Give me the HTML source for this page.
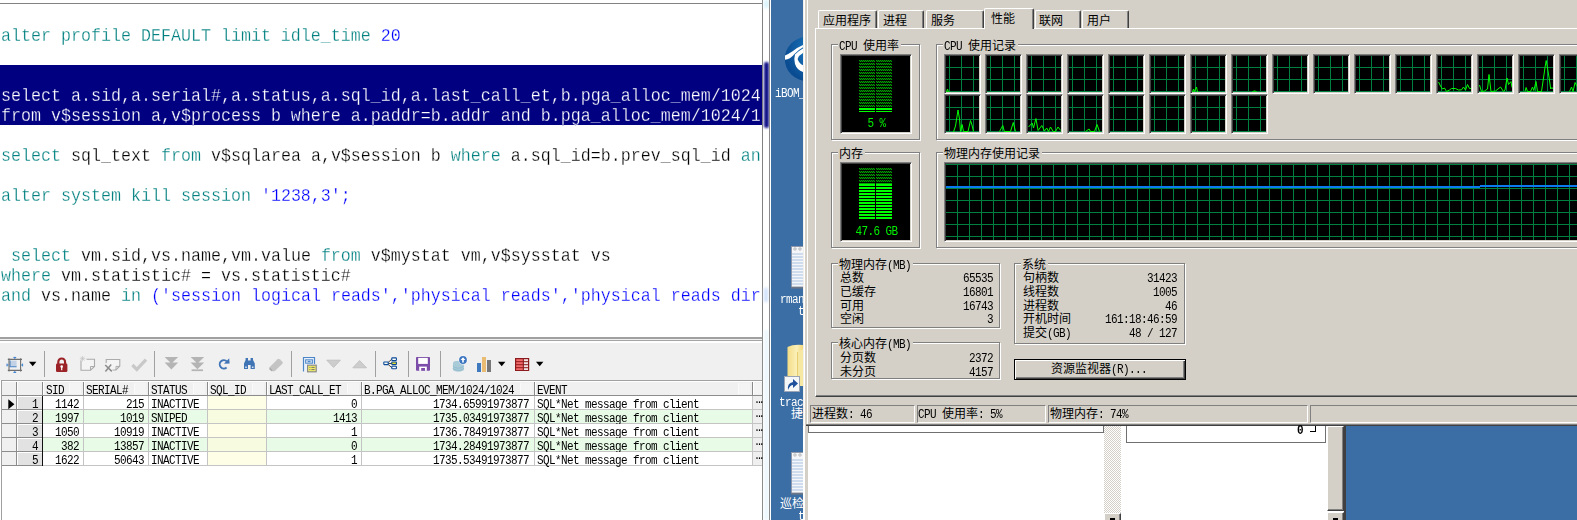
<!DOCTYPE html><html><head><meta charset="utf-8"><title>screen</title><style>
html,body{margin:0;padding:0;overflow:hidden}
body{width:1577px;height:520px;overflow:hidden;background:#fff;position:relative;font-family:"Liberation Sans","Noto Sans CJK SC",sans-serif}
div,span.a,svg{position:absolute}
div{box-sizing:border-box}
.ed{font:16.67px/20px "Liberation Mono","Noto Sans CJK SC",monospace;white-space:pre;left:1px;height:20px;color:#000;transform:scaleY(1.06);transform-origin:0 80%;-webkit-text-stroke:0.25px #fff}
.ed.w{-webkit-text-stroke:0.25px #000080}
.k{color:#008080}.b{color:#0000ff}.w{color:#fff}
.g{font:11px/14px "Liberation Mono","Noto Sans CJK SC",monospace;letter-spacing:-0.6px;white-space:pre;height:14px;color:#000;transform:scaleY(1.15);transform-origin:0 72%}
.c{font:12px/14px "Liberation Sans","Noto Sans CJK SC",sans-serif;white-space:pre;color:#000;height:14px}
.c i,.dk i{font:11px/14px "Liberation Mono","Noto Sans CJK SC",monospace;letter-spacing:-0.6px;font-style:normal;display:inline-block;transform:scaleY(1.15);transform-origin:0 72%}
.r{text-align:right}
.dk{font:12px/14px "Liberation Sans","Noto Sans CJK SC",sans-serif;white-space:pre;color:#fff;height:14px}
</style></head><body>
<!-- editor -->
<div style="left:0px;top:3px;width:763px;height:1px;background:#828282;"></div>
<div style="left:762px;top:0px;width:1px;height:520px;background:#828282;"></div>
<div style="left:0px;top:65px;width:762px;height:60px;background:#000080;"></div>
<div class="ed " style="top:27px"><span class="k">alter profile DEFAULT limit idle_time</span> <span class="b">20</span></div>
<div class="ed w" style="top:87px">select a.sid,a.serial#,a.status,a.sql_id,a.last_call_et,b.pga_alloc_mem/1024</div>
<div class="ed w" style="top:107px">from v$session a,v$process b where a.paddr=b.addr and b.pga_alloc_mem/1024/1</div>
<div class="ed " style="top:147px"><span class="k">select</span> sql_text <span class="k">from</span> v$sqlarea a,v$session b <span class="k">where</span> a.sql_id=b.prev_sql_id <span class="k">an</span></div>
<div class="ed " style="top:187px"><span class="k">alter system kill session</span> <span class="b">'1238,3';</span></div>
<div class="ed " style="top:247px"> <span class="k">select</span> vm.sid,vs.name,vm.value <span class="k">from</span> v$mystat vm,v$sysstat vs</div>
<div class="ed " style="top:267px"><span class="k">where</span> vm.statistic# = vs.statistic#</div>
<div class="ed " style="top:287px"><span class="k">and</span> vs.name <span class="k">in</span> <span class="b">('session logical reads','physical reads','physical reads dir</span></div>
<div style="left:763px;top:0px;width:8px;height:520px;background:#fff;"></div>
<div style="left:764px;top:62px;width:5px;height:66px;background:#15158a;filter:blur(1.2px);border-radius:2px"></div>
<div style="left:764px;top:0px;width:5px;height:8px;background:#d8f4fb;filter:blur(1.5px)"></div>
<div style="left:764px;top:288px;width:4px;height:14px;background:#cfe0fb;filter:blur(1.5px)"></div>
<div style="left:764px;top:330px;width:5px;height:190px;background:#eef8fc;filter:blur(1px)"></div>
<div style="left:769px;top:0px;width:1px;height:520px;background:#8a8a8a;"></div>
<div style="left:0px;top:337px;width:762px;height:2px;background:#a0a0a0;"></div>
<div style="left:0px;top:339px;width:762px;height:1px;background:#f0f0f0;"></div>
<div style="left:0px;top:340px;width:762px;height:1px;background:#a4a4a4;"></div>
<div style="left:0px;top:341px;width:762px;height:2px;background:#fff;"></div>
<div style="left:0px;top:343px;width:762px;height:37px;background:#f0f0f0;"></div>
<!-- toolbar -->
<div style="left:44px;top:351px;width:1px;height:26px;background:#a0a0a0;"></div>
<div style="left:154px;top:351px;width:1px;height:26px;background:#a0a0a0;"></div>
<div style="left:291px;top:351px;width:1px;height:26px;background:#a0a0a0;"></div>
<div style="left:375px;top:351px;width:1px;height:26px;background:#a0a0a0;"></div>
<div style="left:408px;top:351px;width:1px;height:26px;background:#a0a0a0;"></div>
<div style="left:440px;top:351px;width:1px;height:26px;background:#a0a0a0;"></div>
<svg style="left:6px;top:356px" width="18" height="17" viewBox="0 0 18 17"><rect x="4" y="4.6" width="6.6" height="6.2" fill="#c2d2e4"/>
<path d="M4 4.6V10.8H10.6" stroke="#4a86c8" stroke-width="1.1" fill="none"/>
<path d="M1.8 3.4H16M1.8 14.4H16M3 2.2V15.6M14.6 2.2V15.6" stroke="#6e6e6e" stroke-width="1.1" fill="none"/>
<path d="M7.4 1.4H10.2M8.8 1.4V3M7.4 16.4H10.2M8.8 15V16.4M1 7.6V10.4M1 9H2.4M16.6 7.6V10.4M15.2 9H16.6" stroke="#3b7fd0" stroke-width="1" fill="none"/></svg>
<svg style="left:29px;top:361px" width="8" height="6" viewBox="0 0 8 6"><path d="M0 0.8H7.4L3.7 5.2Z" fill="#000"/></svg>
<svg style="left:498px;top:361px" width="8" height="6" viewBox="0 0 8 6"><path d="M0 0.8H7.4L3.7 5.2Z" fill="#000"/></svg>
<svg style="left:536px;top:361px" width="8" height="6" viewBox="0 0 8 6"><path d="M0 0.8H7.4L3.7 5.2Z" fill="#000"/></svg>
<svg style="left:55px;top:357px" width="14" height="16" viewBox="0 0 14 16"><path d="M3.3 7V5.2A3.4 3.7 0 0 1 10.1 5.2V7" fill="none" stroke="#9b2328" stroke-width="2.2"/>
<rect x="1" y="6.5" width="11.4" height="8.6" rx="1.3" fill="#9b2328"/>
<circle cx="6.7" cy="9.6" r="1.3" fill="#fff"/><rect x="6.1" y="9.8" width="1.2" height="3.4" fill="#fff"/></svg>
<svg style="left:79px;top:355px" width="18" height="17" viewBox="0 0 18 17"><path d="M2 5.5V15.2H11.5L15.5 11.5V4.3H7.5" fill="#f4f4f4" stroke="#ababab" stroke-width="1.1"/>
<path d="M11.5 15.2V11.5H15.5" fill="none" stroke="#ababab" stroke-width="1"/>
<path d="M3.5 1V6.4M0.8 3.7H6.2M1.6 1.8L5.4 5.6M5.4 1.8L1.6 5.6" stroke="#c4c4c4" stroke-width="0.7"/></svg>
<svg style="left:104px;top:357px" width="18" height="16" viewBox="0 0 18 16"><path d="M2.2 6V2.5H15.8V9L12 13H8.5" fill="#f4f4f4" stroke="#ababab" stroke-width="1.1"/>
<path d="M12 13V9.4H15.8" fill="none" stroke="#ababab" stroke-width="1"/>
<path d="M1.2 8L7.8 14.4M7.2 7.6L1.4 14.6" stroke="#8c8c8c" stroke-width="1.5" fill="none"/></svg>
<svg style="left:131px;top:357px" width="17" height="15" viewBox="0 0 17 15"><path d="M1.4 8L5.8 12.4L15 2.6" stroke="#c8c8c8" stroke-width="3.2" fill="none"/></svg>
<svg style="left:164px;top:356px" width="15" height="15" viewBox="0 0 15 15"><path d="M0.6 1H14.2L7.4 7.5Z M0.6 6.6H14.2L7.4 13.6Z" fill="#b4b4b4"/></svg>
<svg style="left:190px;top:356px" width="15" height="16" viewBox="0 0 15 16"><path d="M0.6 1H14.2L7.4 7.5Z M0.6 6.6H14.2L7.4 13.2Z" fill="#b4b4b4"/><rect x="1.6" y="13.4" width="11.4" height="1.7" fill="#b4b4b4"/></svg>
<svg style="left:217px;top:357px" width="14" height="14" viewBox="0 0 14 14"><path d="M9.6 10.6A4.2 4.2 0 1 1 9.9 4.4" fill="none" stroke="#3f74b5" stroke-width="1.9"/>
<path d="M7 6.8L12.6 6.4L12.2 1.2Z" fill="#3f74b5"/></svg>
<svg style="left:243px;top:357px" width="13" height="13" viewBox="0 0 13 13"><path d="M1 12V6.5L2.6 3V1H5V3.6H7.6V1H10V3L11.8 6.5V12H7.6V8H5V12Z" fill="#3f74b5"/>
<rect x="2.2" y="9.6" width="1.6" height="1.2" fill="#fff"/><rect x="8.9" y="9.6" width="1.6" height="1.2" fill="#fff"/></svg>
<svg style="left:268px;top:358px" width="16" height="14" viewBox="0 0 16 14"><path d="M1 9.8L9.6 1.2Q10.6 0.4 11.6 1.2L14.4 3.8Q15.2 4.8 14.4 5.8L6.6 13.2H3.6Z" fill="#c4c4c4"/>
<path d="M1.6 10.4L4 12.8" stroke="#aaa" stroke-width="1.6"/></svg>
<svg style="left:302px;top:356px" width="16" height="17" viewBox="0 0 16 17"><path d="M1.5 15.5V1.5H12.5V8" fill="#eaf1fa" stroke="#4a86c8" stroke-width="1.2"/>
<rect x="3.6" y="3.8" width="7" height="3.4" fill="#c9daee" stroke="#4a86c8" stroke-width="0.9"/>
<rect x="5.8" y="4.9" width="2.6" height="1.2" fill="#4a86c8"/>
<rect x="5.6" y="9.2" width="8.6" height="6.6" fill="#f3ee6a" stroke="#8a8a8a" stroke-width="1.2"/>
<path d="M7.4 11.4H8.4M9.4 11.4H12.6M7.4 13.6H8.4M9.4 13.6H12.6" stroke="#6a6a6a" stroke-width="0.9"/></svg>
<svg style="left:326px;top:359px" width="16" height="10" viewBox="0 0 16 10"><path d="M0.8 1.2H14.4L7.6 8.4Z" fill="#cdcdcd" stroke="#bcbcbc" stroke-width="0.8"/></svg>
<svg style="left:352px;top:359px" width="16" height="10" viewBox="0 0 16 10"><path d="M0.8 8.8H14.6L7.6 1.6Z" fill="#cdcdcd" stroke="#bcbcbc" stroke-width="0.8"/></svg>
<svg style="left:383px;top:357px" width="15" height="13" viewBox="0 0 15 13"><path d="M4 6.5L9 2M4 6.5H9M4 6.5L9 10.8" stroke="#333" stroke-width="0.9" fill="none"/>
<rect x="0.8" y="5" width="4.4" height="2.6" rx="0.5" fill="#fff" stroke="#0b4a96" stroke-width="1.1"/>
<rect x="8.8" y="0.9" width="4.6" height="2.6" rx="0.5" fill="#fff" stroke="#0b4a96" stroke-width="1.1"/>
<rect x="8.8" y="5" width="4.6" height="2.6" rx="0.5" fill="#eadf2a" stroke="#0b4a96" stroke-width="1.1"/>
<rect x="8.8" y="9.2" width="4.6" height="2.6" rx="0.5" fill="#fff" stroke="#0b4a96" stroke-width="1.1"/></svg>
<svg style="left:416px;top:357px" width="15" height="14" viewBox="0 0 15 14"><rect x="0" y="0" width="14" height="13.8" rx="0.8" fill="#7c4ea9"/>
<rect x="2.2" y="0.9" width="9.6" height="6" fill="#fff"/><rect x="3.2" y="9.6" width="7.6" height="4.2" fill="#fff"/><rect x="5.2" y="11" width="3.8" height="2.8" fill="#7c4ea9"/></svg>
<svg style="left:452px;top:355px" width="16" height="18" viewBox="0 0 16 18"><path d="M1 8V14.4A5.4 2.3 0 0 0 11.8 14.4V8Z" fill="#a9cbd8"/>
<ellipse cx="6.4" cy="8" rx="5.4" ry="2.3" fill="#a9cbd8"/>
<path d="M1 10.8A5.4 2.3 0 0 0 11.8 10.8M1 13A5.4 2.3 0 0 0 11.8 13" stroke="#8db9c9" stroke-width="0.9" fill="none"/>
<circle cx="11" cy="5" r="4.5" fill="#fff"/><circle cx="11" cy="5" r="3.9" fill="#3e76c0"/>
<path d="M11 2.2L8.6 5H10.2V7.6H11.8V5H13.4Z" fill="#fff"/></svg>
<div style="left:477px;top:363px;width:4px;height:9px;background:#3f7abf;"></div>
<div style="left:482px;top:357px;width:4px;height:15px;background:#e9bb73;"></div>
<div style="left:487px;top:360px;width:4px;height:12px;background:#777;"></div>
<svg style="left:515px;top:358px" width="15" height="14" viewBox="0 0 15 14"><rect x="0" y="0" width="14.2" height="13" fill="#8a1a1c"/>
<g fill="#f46a6a"><rect x="1.2" y="1.2" width="6.6" height="2"/><rect x="1.2" y="4.2" width="6.6" height="2"/><rect x="1.2" y="7.2" width="6.6" height="2"/><rect x="1.2" y="10.2" width="6.6" height="1.8"/></g>
<g fill="#f0e4e4"><rect x="8.9" y="1.2" width="4.1" height="2"/><rect x="8.9" y="4.2" width="4.1" height="2"/><rect x="8.9" y="7.2" width="4.1" height="2"/><rect x="8.9" y="10.2" width="4.1" height="1.8"/></g></svg>
<!-- result grid -->
<div style="left:1px;top:380px;width:761px;height:1px;background:#a0a0a0;"></div>
<div style="left:1px;top:380px;width:1px;height:140px;background:#a0a0a0;"></div>
<div style="left:2px;top:381px;width:760px;height:14px;background:#f0f0f0;"></div>
<div style="left:2px;top:381px;width:760px;height:1px;background:#fff;"></div>
<div style="left:2px;top:395px;width:760px;height:1px;background:#8c8c8c;"></div>
<div style="left:16px;top:382px;width:1px;height:13px;background:#8a8a8a;"></div>
<div style="left:17px;top:382px;width:1px;height:13px;background:#fff;"></div>
<div style="left:42px;top:382px;width:1px;height:13px;background:#8a8a8a;"></div>
<div style="left:43px;top:382px;width:1px;height:13px;background:#fff;"></div>
<div style="left:83px;top:382px;width:1px;height:13px;background:#8a8a8a;"></div>
<div style="left:84px;top:382px;width:1px;height:13px;background:#fff;"></div>
<div style="left:148px;top:382px;width:1px;height:13px;background:#8a8a8a;"></div>
<div style="left:149px;top:382px;width:1px;height:13px;background:#fff;"></div>
<div style="left:207px;top:382px;width:1px;height:13px;background:#8a8a8a;"></div>
<div style="left:208px;top:382px;width:1px;height:13px;background:#fff;"></div>
<div style="left:266px;top:382px;width:1px;height:13px;background:#8a8a8a;"></div>
<div style="left:267px;top:382px;width:1px;height:13px;background:#fff;"></div>
<div style="left:361px;top:382px;width:1px;height:13px;background:#8a8a8a;"></div>
<div style="left:362px;top:382px;width:1px;height:13px;background:#fff;"></div>
<div style="left:534px;top:382px;width:1px;height:13px;background:#8a8a8a;"></div>
<div style="left:535px;top:382px;width:1px;height:13px;background:#fff;"></div>
<div style="left:752px;top:382px;width:1px;height:13px;background:#8a8a8a;"></div>
<div style="left:753px;top:382px;width:1px;height:13px;background:#fff;"></div>
<div class="g" style="left:46px;top:384px">SID</div>
<div style="left:69px;top:383px;width:12px;height:11px;background:#f4f4f4;border-left:1px solid #fafafa"></div>
<div class="g" style="left:86px;top:384px">SERIAL#</div>
<div style="left:134px;top:383px;width:12px;height:11px;background:#f4f4f4;border-left:1px solid #fafafa"></div>
<div class="g" style="left:151px;top:384px">STATUS</div>
<div style="left:193px;top:383px;width:12px;height:11px;background:#f4f4f4;border-left:1px solid #fafafa"></div>
<div class="g" style="left:210px;top:384px">SQL_ID</div>
<div style="left:252px;top:383px;width:12px;height:11px;background:#f4f4f4;border-left:1px solid #fafafa"></div>
<div class="g" style="left:269px;top:384px">LAST_CALL_ET</div>
<div style="left:347px;top:383px;width:12px;height:11px;background:#f4f4f4;border-left:1px solid #fafafa"></div>
<div class="g" style="left:364px;top:384px">B.PGA_ALLOC_MEM/1024/1024</div>
<div style="left:520px;top:383px;width:12px;height:11px;background:#f4f4f4;border-left:1px solid #fafafa"></div>
<div class="g" style="left:537px;top:384px">EVENT</div>
<div style="left:738px;top:383px;width:12px;height:11px;background:#f4f4f4;border-left:1px solid #fafafa"></div>
<div style="left:754px;top:383px;width:7px;height:11px;background:#f4f4f4;"></div>
<div style="left:43px;top:396px;width:719px;height:13px;background:#fff;"></div>
<div style="left:208px;top:396px;width:58px;height:13px;background:#fefee6;"></div>
<div style="left:2px;top:396px;width:14px;height:13px;background:#f0f0f0;"></div>
<div style="left:17px;top:396px;width:25px;height:13px;background:#e2e2e2;border-top:1px solid #fff;border-left:1px solid #fff"></div>
<div style="left:2px;top:409px;width:760px;height:1px;background:#c4c4c4;"></div>
<div style="left:2px;top:409px;width:40px;height:1px;background:#8c8c8c;"></div>
<div class="g r" style="left:17px;top:398px;width:21px">1</div>
<div class="g r" style="left:43px;top:398px;width:36px">1142</div>
<div class="g r" style="left:84px;top:398px;width:60px">215</div>
<div class="g" style="left:151px;top:398px">INACTIVE</div>
<div class="g r" style="left:267px;top:398px;width:90px">0</div>
<div class="g r" style="left:362px;top:398px;width:167px">1734.65991973877</div>
<div class="g" style="left:537px;top:398px">SQL*Net message from client</div>
<div style="left:753px;top:396px;width:9px;height:13px;background:#efefef;"></div>
<div class="g" style="left:754px;top:396px;letter-spacing:-3.6px;font-size:10px">···</div>
<div style="left:43px;top:410px;width:719px;height:13px;background:#e7fbe6;"></div>
<div style="left:208px;top:410px;width:58px;height:13px;background:#f7fbdf;"></div>
<div style="left:2px;top:410px;width:14px;height:13px;background:#f0f0f0;"></div>
<div style="left:17px;top:410px;width:25px;height:13px;background:#e2e2e2;border-top:1px solid #fff;border-left:1px solid #fff"></div>
<div style="left:2px;top:423px;width:760px;height:1px;background:#c4c4c4;"></div>
<div style="left:2px;top:423px;width:40px;height:1px;background:#8c8c8c;"></div>
<div class="g r" style="left:17px;top:412px;width:21px">2</div>
<div class="g r" style="left:43px;top:412px;width:36px">1997</div>
<div class="g r" style="left:84px;top:412px;width:60px">1019</div>
<div class="g" style="left:151px;top:412px">SNIPED</div>
<div class="g r" style="left:267px;top:412px;width:90px">1413</div>
<div class="g r" style="left:362px;top:412px;width:167px">1735.03491973877</div>
<div class="g" style="left:537px;top:412px">SQL*Net message from client</div>
<div style="left:753px;top:410px;width:9px;height:13px;background:#efefef;"></div>
<div class="g" style="left:754px;top:410px;letter-spacing:-3.6px;font-size:10px">···</div>
<div style="left:43px;top:424px;width:719px;height:13px;background:#fff;"></div>
<div style="left:208px;top:424px;width:58px;height:13px;background:#fefee6;"></div>
<div style="left:2px;top:424px;width:14px;height:13px;background:#f0f0f0;"></div>
<div style="left:17px;top:424px;width:25px;height:13px;background:#e2e2e2;border-top:1px solid #fff;border-left:1px solid #fff"></div>
<div style="left:2px;top:437px;width:760px;height:1px;background:#c4c4c4;"></div>
<div style="left:2px;top:437px;width:40px;height:1px;background:#8c8c8c;"></div>
<div class="g r" style="left:17px;top:426px;width:21px">3</div>
<div class="g r" style="left:43px;top:426px;width:36px">1050</div>
<div class="g r" style="left:84px;top:426px;width:60px">10919</div>
<div class="g" style="left:151px;top:426px">INACTIVE</div>
<div class="g r" style="left:267px;top:426px;width:90px">1</div>
<div class="g r" style="left:362px;top:426px;width:167px">1736.78491973877</div>
<div class="g" style="left:537px;top:426px">SQL*Net message from client</div>
<div style="left:753px;top:424px;width:9px;height:13px;background:#efefef;"></div>
<div class="g" style="left:754px;top:424px;letter-spacing:-3.6px;font-size:10px">···</div>
<div style="left:43px;top:438px;width:719px;height:13px;background:#e7fbe6;"></div>
<div style="left:208px;top:438px;width:58px;height:13px;background:#f7fbdf;"></div>
<div style="left:2px;top:438px;width:14px;height:13px;background:#f0f0f0;"></div>
<div style="left:17px;top:438px;width:25px;height:13px;background:#e2e2e2;border-top:1px solid #fff;border-left:1px solid #fff"></div>
<div style="left:2px;top:451px;width:760px;height:1px;background:#c4c4c4;"></div>
<div style="left:2px;top:451px;width:40px;height:1px;background:#8c8c8c;"></div>
<div class="g r" style="left:17px;top:440px;width:21px">4</div>
<div class="g r" style="left:43px;top:440px;width:36px">382</div>
<div class="g r" style="left:84px;top:440px;width:60px">13857</div>
<div class="g" style="left:151px;top:440px">INACTIVE</div>
<div class="g r" style="left:267px;top:440px;width:90px">0</div>
<div class="g r" style="left:362px;top:440px;width:167px">1734.28491973877</div>
<div class="g" style="left:537px;top:440px">SQL*Net message from client</div>
<div style="left:753px;top:438px;width:9px;height:13px;background:#efefef;"></div>
<div class="g" style="left:754px;top:438px;letter-spacing:-3.6px;font-size:10px">···</div>
<div style="left:43px;top:452px;width:719px;height:13px;background:#fff;"></div>
<div style="left:208px;top:452px;width:58px;height:13px;background:#fefee6;"></div>
<div style="left:2px;top:452px;width:14px;height:13px;background:#f0f0f0;"></div>
<div style="left:17px;top:452px;width:25px;height:13px;background:#e2e2e2;border-top:1px solid #fff;border-left:1px solid #fff"></div>
<div style="left:2px;top:465px;width:760px;height:1px;background:#c4c4c4;"></div>
<div style="left:2px;top:465px;width:40px;height:1px;background:#8c8c8c;"></div>
<div class="g r" style="left:17px;top:454px;width:21px">5</div>
<div class="g r" style="left:43px;top:454px;width:36px">1622</div>
<div class="g r" style="left:84px;top:454px;width:60px">50643</div>
<div class="g" style="left:151px;top:454px">INACTIVE</div>
<div class="g r" style="left:267px;top:454px;width:90px">1</div>
<div class="g r" style="left:362px;top:454px;width:167px">1735.53491973877</div>
<div class="g" style="left:537px;top:454px">SQL*Net message from client</div>
<div style="left:753px;top:452px;width:9px;height:13px;background:#efefef;"></div>
<div class="g" style="left:754px;top:452px;letter-spacing:-3.6px;font-size:10px">···</div>
<div style="left:83px;top:396px;width:1px;height:70px;background:#c4c4c4;"></div>
<div style="left:148px;top:396px;width:1px;height:70px;background:#c4c4c4;"></div>
<div style="left:207px;top:396px;width:1px;height:70px;background:#c4c4c4;"></div>
<div style="left:266px;top:396px;width:1px;height:70px;background:#c4c4c4;"></div>
<div style="left:361px;top:396px;width:1px;height:70px;background:#c4c4c4;"></div>
<div style="left:534px;top:396px;width:1px;height:70px;background:#c4c4c4;"></div>
<div style="left:752px;top:396px;width:1px;height:70px;background:#c4c4c4;"></div>
<div style="left:16px;top:396px;width:1px;height:70px;background:#8c8c8c;"></div>
<div style="left:42px;top:396px;width:1px;height:70px;background:#111;"></div>
<svg style="left:8px;top:399px" width="8" height="11" viewBox="0 0 8 11"><path d="M0.3 0.3V10.3L6.4 5.3Z" fill="#000"/></svg>
<!-- desktop strip -->
<div style="left:770px;top:0px;width:1px;height:520px;background:#fff;"></div>
<div style="left:771px;top:0px;width:32px;height:520px;background:#3a6ea5;"></div>
<svg style="left:771px;top:36px" width="32" height="48" viewBox="0 0 32 48"><defs><radialGradient id="ib" cx="0.75" cy="0.3" r="0.75"><stop offset="0" stop-color="#1f86cc"/><stop offset="1" stop-color="#0a4c92"/></radialGradient></defs>
<circle cx="35.8" cy="23" r="22" fill="url(#ib)"/>
<path d="M14 19.5Q17.5 18 22 15Q27 11 32 9V11.2Q27 14 23.5 18Q19 23.5 14 23.8Z" fill="#fff"/>
<path d="M24 18.5Q28 14.5 32 12.5V17Q28 19 26.6 23Q28 27.5 32 29.2V36Q26 34 24 28Q22.6 23 24 18.5Z" fill="#fff"/></svg>
<div class="dk" style="left:775px;top:86px"><i>iBOM_</i></div>
<svg style="left:791px;top:246px" width="12" height="43" viewBox="0 0 12 43"><rect x="0.5" y="0.5" width="14" height="40.5" fill="#f4f6fa" stroke="#8e98a8" stroke-width="1"/>
<path d="M1 8H14M1 11H14M1 14H14M1 17H14M1 20H14M1 23H14M1 26H14M1 29H14M1 32H14M1 35H14M1 38H14" stroke="#c2d3ea" stroke-width="1.4"/>
<circle cx="4" cy="3" r="1.2" fill="#fff" stroke="#888" stroke-width="0.6"/><circle cx="9" cy="3" r="1.2" fill="#fff" stroke="#888" stroke-width="0.6"/>
<rect x="0" y="41" width="14" height="1.6" fill="#6d7686"/></svg>
<svg style="left:791px;top:452px" width="12" height="43" viewBox="0 0 12 43"><rect x="0.5" y="0.5" width="14" height="40.5" fill="#f4f6fa" stroke="#8e98a8" stroke-width="1"/>
<path d="M1 8H14M1 11H14M1 14H14M1 17H14M1 20H14M1 23H14M1 26H14M1 29H14M1 32H14M1 35H14M1 38H14" stroke="#c2d3ea" stroke-width="1.4"/>
<circle cx="4" cy="3" r="1.2" fill="#fff" stroke="#888" stroke-width="0.6"/><circle cx="9" cy="3" r="1.2" fill="#fff" stroke="#888" stroke-width="0.6"/>
<rect x="0" y="41" width="14" height="1.6" fill="#6d7686"/></svg>
<div class="dk" style="left:780px;top:292px"><i>rman</i></div>
<div class="dk" style="left:798px;top:304px"><i>t</i></div>
<svg style="left:787px;top:344px" width="16" height="44" viewBox="0 0 16 44"><defs><linearGradient id="fo" x1="0" y1="0" x2="1" y2="0"><stop offset="0" stop-color="#f3dc86"/><stop offset="0.6" stop-color="#fbf0b8"/><stop offset="1" stop-color="#f2d77a"/></linearGradient></defs>
<path d="M0.5 3Q6 0 16 1V42H0.5Z" fill="url(#fo)"/><path d="M10.5 8L16 5V42H10.5Z" fill="#f6e7a2"/><path d="M10.5 8V42" stroke="#e3c766" stroke-width="0.8"/></svg>
<svg style="left:784px;top:376px" width="16" height="16" viewBox="0 0 16 16"><rect x="0.5" y="0.5" width="15" height="15" fill="#f4f6f8" stroke="#9aa4b4" stroke-width="1"/>
<path d="M4 14Q3 7 9 6V3L14 7.5L9 12V9Q6 9 4 14Z" fill="#1d4f9c"/></svg>
<div class="dk" style="left:779px;top:395px"><i>trac</i></div>
<div class="dk" style="left:791px;top:407px">捷</div>
<div class="dk" style="left:780px;top:497px">巡检</div>
<div class="dk" style="left:798px;top:509px"><i>t</i></div>
<!-- task manager -->
<div style="left:803px;top:0px;width:774px;height:426px;background:#d4d0c8;"></div>
<div style="left:803px;top:0px;width:1px;height:426px;background:#f2f0ea;"></div>
<div style="left:804px;top:0px;width:1px;height:426px;background:#fff;"></div>
<div style="left:807px;top:0px;width:1px;height:424px;background:#fff;"></div>
<div style="left:815px;top:28px;width:780px;height:369px;border-left:1px solid #fff;border-top:1px solid #fff;border-bottom:1px solid #404040;box-shadow:inset 0 -1px 0 #808080"></div>
<div style="left:818px;top:10px;width:59px;height:18px;background:#d4d0c8;border-left:1px solid #fff;border-top:1px solid #fff;border-right:1px solid #404040;border-radius:2px 2px 0 0;box-shadow:inset -1px 0 0 #808080"></div>
<div class="c" style="left:823px;top:14px">应用程序</div>
<div style="left:878px;top:10px;width:46px;height:18px;background:#d4d0c8;border-left:1px solid #fff;border-top:1px solid #fff;border-right:1px solid #404040;border-radius:2px 2px 0 0;box-shadow:inset -1px 0 0 #808080"></div>
<div class="c" style="left:883px;top:14px">进程</div>
<div style="left:926px;top:10px;width:58px;height:18px;background:#d4d0c8;border-left:1px solid #fff;border-top:1px solid #fff;border-right:1px solid #404040;border-radius:2px 2px 0 0;box-shadow:inset -1px 0 0 #808080"></div>
<div class="c" style="left:931px;top:14px">服务</div>
<div style="left:1035px;top:10px;width:46px;height:18px;background:#d4d0c8;border-left:1px solid #fff;border-top:1px solid #fff;border-right:1px solid #404040;border-radius:2px 2px 0 0;box-shadow:inset -1px 0 0 #808080"></div>
<div class="c" style="left:1039px;top:14px">联网</div>
<div style="left:1082px;top:10px;width:47px;height:18px;background:#d4d0c8;border-left:1px solid #fff;border-top:1px solid #fff;border-right:1px solid #404040;border-radius:2px 2px 0 0;box-shadow:inset -1px 0 0 #808080"></div>
<div class="c" style="left:1087px;top:14px">用户</div>
<div style="left:984px;top:8px;width:50px;height:21px;background:#d4d0c8;border-left:1px solid #fff;border-top:1px solid #fff;border-right:1px solid #404040;border-radius:2px 2px 0 0;box-shadow:inset -1px 0 0 #808080"></div>
<div class="c" style="left:991px;top:12px">性能</div>
<div style="left:831px;top:44px;width:89px;height:96px;border:1px solid #808080;box-shadow:1px 1px 0 #fff, inset 1px 1px 0 #fff"></div>
<div class="c" style="left:838px;top:39px;background:#d4d0c8;padding:0 2px 0 1px"><i>CPU </i>使用率</div>
<div style="left:831px;top:152px;width:89px;height:96px;border:1px solid #808080;box-shadow:1px 1px 0 #fff, inset 1px 1px 0 #fff"></div>
<div class="c" style="left:838px;top:147px;background:#d4d0c8;padding:0 2px 0 1px">内存</div>
<div style="left:936px;top:44px;width:700px;height:96px;border:1px solid #808080;box-shadow:1px 1px 0 #fff, inset 1px 1px 0 #fff"></div>
<div class="c" style="left:943px;top:39px;background:#d4d0c8;padding:0 2px 0 1px"><i>CPU </i>使用记录</div>
<div style="left:936px;top:152px;width:700px;height:96px;border:1px solid #808080;box-shadow:1px 1px 0 #fff, inset 1px 1px 0 #fff"></div>
<div class="c" style="left:943px;top:147px;background:#d4d0c8;padding:0 2px 0 1px">物理内存使用记录</div>
<div style="left:840px;top:54px;width:72px;height:80px;background:#000;border:1px solid;border-color:#808080 #fff #fff #808080;box-shadow:inset 1px 1px 0 #404040, inset -1px -1px 0 #d4d0c8"></div>
<div style="left:840px;top:162px;width:72px;height:80px;background:#000;border:1px solid;border-color:#808080 #fff #fff #808080;box-shadow:inset 1px 1px 0 #404040, inset -1px -1px 0 #d4d0c8"></div>
<svg width="0" height="0" style="left:0;top:0"><defs><pattern id="dp" width="2" height="3" patternUnits="userSpaceOnUse"><rect width="2" height="3" fill="#000"/><rect x="0" y="0" width="1" height="1" fill="#00a000"/><rect x="1" y="1" width="1" height="1" fill="#00a000"/><rect x="0" y="1" width="1" height="1" fill="#003800"/><rect x="1" y="0" width="1" height="1" fill="#003800"/></pattern></defs></svg>
<svg style="left:859px;top:60px" width="16" height="47"><rect width="16" height="47" fill="url(#dp)"/></svg>
<svg style="left:876px;top:60px" width="16" height="47"><rect width="16" height="47" fill="url(#dp)"/></svg>
<div style="left:859px;top:108px;width:16px;height:2px;background:#00ff00;"></div>
<div style="left:876px;top:108px;width:16px;height:2px;background:#00ff00;"></div>
<div style="left:859px;top:111px;width:16px;height:1px;background:#00ff00;"></div>
<div style="left:876px;top:111px;width:16px;height:1px;background:#00ff00;"></div>
<div class="g" style="left:842px;top:117px;width:69px;text-align:center;color:#00f000">5 %</div>
<svg style="left:859px;top:168px" width="16" height="15"><rect width="16" height="15" fill="url(#dp)"/></svg>
<svg style="left:876px;top:168px" width="16" height="15"><rect width="16" height="15" fill="url(#dp)"/></svg>
<div style="left:859px;top:184px;width:16px;height:35px;background:#00ff00;background-image:linear-gradient(#00ff00 66.6%,#000 66.6%);background-size:3px 3px"></div>
<div style="left:876px;top:184px;width:16px;height:35px;background:#00ff00;background-image:linear-gradient(#00ff00 66.6%,#000 66.6%);background-size:3px 3px"></div>
<div style="left:859px;top:183px;width:16px;height:1px;background:#00a000;"></div>
<div style="left:876px;top:183px;width:16px;height:1px;background:#00a000;"></div>
<div class="g" style="left:842px;top:225px;width:69px;text-align:center;color:#00f000">47.6 GB</div>
<div style="left:944px;top:54px;width:37px;height:40px;background:#000;border:1px solid;border-color:#808080 #fff #fff #808080;box-shadow:inset 1px 1px 0 #404040, inset -1px -1px 0 #d4d0c8"></div>
<div style="left:946px;top:56px;width:33px;height:36px;background:#000;background-color:#000;background-image:linear-gradient(#008040 1px,transparent 1px),linear-gradient(90deg,#008040 1px,transparent 1px);background-size:12px 12px,12px 12px;background-position:3px -1px,3px -1px"></div>
<svg style="left:946px;top:56px" width="33" height="36"><polyline points="0.5,36.0 1.5,33.0 2.5,36.0 3.5,36.0" fill="none" stroke="#00ff00" stroke-width="1"/></svg>
<div style="left:985px;top:54px;width:37px;height:40px;background:#000;border:1px solid;border-color:#808080 #fff #fff #808080;box-shadow:inset 1px 1px 0 #404040, inset -1px -1px 0 #d4d0c8"></div>
<div style="left:987px;top:56px;width:33px;height:36px;background:#000;background-color:#000;background-image:linear-gradient(#008040 1px,transparent 1px),linear-gradient(90deg,#008040 1px,transparent 1px);background-size:12px 12px,12px 12px;background-position:3px -1px,3px -1px"></div>
<div style="left:1026px;top:54px;width:37px;height:40px;background:#000;border:1px solid;border-color:#808080 #fff #fff #808080;box-shadow:inset 1px 1px 0 #404040, inset -1px -1px 0 #d4d0c8"></div>
<div style="left:1028px;top:56px;width:33px;height:36px;background:#000;background-color:#000;background-image:linear-gradient(#008040 1px,transparent 1px),linear-gradient(90deg,#008040 1px,transparent 1px);background-size:12px 12px,12px 12px;background-position:3px -1px,3px -1px"></div>
<div style="left:1067px;top:54px;width:37px;height:40px;background:#000;border:1px solid;border-color:#808080 #fff #fff #808080;box-shadow:inset 1px 1px 0 #404040, inset -1px -1px 0 #d4d0c8"></div>
<div style="left:1069px;top:56px;width:33px;height:36px;background:#000;background-color:#000;background-image:linear-gradient(#008040 1px,transparent 1px),linear-gradient(90deg,#008040 1px,transparent 1px);background-size:12px 12px,12px 12px;background-position:3px -1px,3px -1px"></div>
<div style="left:1108px;top:54px;width:37px;height:40px;background:#000;border:1px solid;border-color:#808080 #fff #fff #808080;box-shadow:inset 1px 1px 0 #404040, inset -1px -1px 0 #d4d0c8"></div>
<div style="left:1110px;top:56px;width:33px;height:36px;background:#000;background-color:#000;background-image:linear-gradient(#008040 1px,transparent 1px),linear-gradient(90deg,#008040 1px,transparent 1px);background-size:12px 12px,12px 12px;background-position:3px -1px,3px -1px"></div>
<div style="left:1149px;top:54px;width:37px;height:40px;background:#000;border:1px solid;border-color:#808080 #fff #fff #808080;box-shadow:inset 1px 1px 0 #404040, inset -1px -1px 0 #d4d0c8"></div>
<div style="left:1151px;top:56px;width:33px;height:36px;background:#000;background-color:#000;background-image:linear-gradient(#008040 1px,transparent 1px),linear-gradient(90deg,#008040 1px,transparent 1px);background-size:12px 12px,12px 12px;background-position:3px -1px,3px -1px"></div>
<div style="left:1190px;top:54px;width:37px;height:40px;background:#000;border:1px solid;border-color:#808080 #fff #fff #808080;box-shadow:inset 1px 1px 0 #404040, inset -1px -1px 0 #d4d0c8"></div>
<div style="left:1192px;top:56px;width:33px;height:36px;background:#000;background-color:#000;background-image:linear-gradient(#008040 1px,transparent 1px),linear-gradient(90deg,#008040 1px,transparent 1px);background-size:12px 12px,12px 12px;background-position:3px -1px,3px -1px"></div>
<svg style="left:1192px;top:56px" width="33" height="36"><polyline points="0.5,36.0 1.5,33.0 2.5,36.0 3.5,33.0 4.5,31.0 5.5,36.0" fill="none" stroke="#00ff00" stroke-width="1"/></svg>
<div style="left:1231px;top:54px;width:37px;height:40px;background:#000;border:1px solid;border-color:#808080 #fff #fff #808080;box-shadow:inset 1px 1px 0 #404040, inset -1px -1px 0 #d4d0c8"></div>
<div style="left:1233px;top:56px;width:33px;height:36px;background:#000;background-color:#000;background-image:linear-gradient(#008040 1px,transparent 1px),linear-gradient(90deg,#008040 1px,transparent 1px);background-size:12px 12px,12px 12px;background-position:3px -1px,3px -1px"></div>
<svg style="left:1233px;top:56px" width="33" height="36"><polyline points="19.5,36.0 20.5,35.0 22.5,35.0 23.5,36.0" fill="none" stroke="#00ff00" stroke-width="1"/></svg>
<div style="left:1272px;top:54px;width:37px;height:40px;background:#000;border:1px solid;border-color:#808080 #fff #fff #808080;box-shadow:inset 1px 1px 0 #404040, inset -1px -1px 0 #d4d0c8"></div>
<div style="left:1274px;top:56px;width:33px;height:36px;background:#000;background-color:#000;background-image:linear-gradient(#008040 1px,transparent 1px),linear-gradient(90deg,#008040 1px,transparent 1px);background-size:12px 12px,12px 12px;background-position:3px -1px,3px -1px"></div>
<div style="left:1313px;top:54px;width:37px;height:40px;background:#000;border:1px solid;border-color:#808080 #fff #fff #808080;box-shadow:inset 1px 1px 0 #404040, inset -1px -1px 0 #d4d0c8"></div>
<div style="left:1315px;top:56px;width:33px;height:36px;background:#000;background-color:#000;background-image:linear-gradient(#008040 1px,transparent 1px),linear-gradient(90deg,#008040 1px,transparent 1px);background-size:12px 12px,12px 12px;background-position:3px -1px,3px -1px"></div>
<div style="left:1354px;top:54px;width:37px;height:40px;background:#000;border:1px solid;border-color:#808080 #fff #fff #808080;box-shadow:inset 1px 1px 0 #404040, inset -1px -1px 0 #d4d0c8"></div>
<div style="left:1356px;top:56px;width:33px;height:36px;background:#000;background-color:#000;background-image:linear-gradient(#008040 1px,transparent 1px),linear-gradient(90deg,#008040 1px,transparent 1px);background-size:12px 12px,12px 12px;background-position:3px -1px,3px -1px"></div>
<div style="left:1395px;top:54px;width:37px;height:40px;background:#000;border:1px solid;border-color:#808080 #fff #fff #808080;box-shadow:inset 1px 1px 0 #404040, inset -1px -1px 0 #d4d0c8"></div>
<div style="left:1397px;top:56px;width:33px;height:36px;background:#000;background-color:#000;background-image:linear-gradient(#008040 1px,transparent 1px),linear-gradient(90deg,#008040 1px,transparent 1px);background-size:12px 12px,12px 12px;background-position:3px -1px,3px -1px"></div>
<div style="left:1436px;top:54px;width:37px;height:40px;background:#000;border:1px solid;border-color:#808080 #fff #fff #808080;box-shadow:inset 1px 1px 0 #404040, inset -1px -1px 0 #d4d0c8"></div>
<div style="left:1438px;top:56px;width:33px;height:36px;background:#000;background-color:#000;background-image:linear-gradient(#008040 1px,transparent 1px),linear-gradient(90deg,#008040 1px,transparent 1px);background-size:12px 12px,12px 12px;background-position:3px -1px,3px -1px"></div>
<svg style="left:1438px;top:56px" width="33" height="36"><polyline points="0.5,26.0 2.5,30.0 4.5,33.0 6.5,32.0 8.5,35.5 11.5,34.0 13.5,32.5 17.5,32.5 20.5,34.0 23.5,33.8 25.5,31.0 27.5,34.0 29.5,28.5 31.5,32.5 33.5,32.5" fill="none" stroke="#00ff00" stroke-width="1"/></svg>
<div style="left:1477px;top:54px;width:37px;height:40px;background:#000;border:1px solid;border-color:#808080 #fff #fff #808080;box-shadow:inset 1px 1px 0 #404040, inset -1px -1px 0 #d4d0c8"></div>
<div style="left:1479px;top:56px;width:33px;height:36px;background:#000;background-color:#000;background-image:linear-gradient(#008040 1px,transparent 1px),linear-gradient(90deg,#008040 1px,transparent 1px);background-size:12px 12px,12px 12px;background-position:3px -1px,3px -1px"></div>
<svg style="left:1479px;top:56px" width="33" height="36"><polyline points="0.5,29.0 2.5,35.5 5.5,35.0 8.5,33.0 10.0,18.5 12.0,35.5 16.5,35.0 21.5,31.0 24.5,35.5 26.0,34.0 28.0,22.0 29.5,28.5 32.0,25.5 33.0,31.5" fill="none" stroke="#00ff00" stroke-width="1"/></svg>
<div style="left:1518px;top:54px;width:37px;height:40px;background:#000;border:1px solid;border-color:#808080 #fff #fff #808080;box-shadow:inset 1px 1px 0 #404040, inset -1px -1px 0 #d4d0c8"></div>
<div style="left:1520px;top:56px;width:33px;height:36px;background:#000;background-color:#000;background-image:linear-gradient(#008040 1px,transparent 1px),linear-gradient(90deg,#008040 1px,transparent 1px);background-size:12px 12px,12px 12px;background-position:3px -1px,3px -1px"></div>
<svg style="left:1520px;top:56px" width="33" height="36"><polyline points="5.0,35.5 6.1,31.5 7.5,35.5 10.5,35.5 12.5,31.0 13.8,34.5 16.0,25.5 17.5,35.5 21.5,35.5 23.5,22.0 25.0,11.5 26.2,4.5 27.5,12.0 29.3,23.0 30.7,33.0 32.0,31.5 33.5,33.5" fill="none" stroke="#00ff00" stroke-width="1"/></svg>
<div style="left:1559px;top:54px;width:37px;height:40px;background:#000;border:1px solid;border-color:#808080 #fff #fff #808080;box-shadow:inset 1px 1px 0 #404040, inset -1px -1px 0 #d4d0c8"></div>
<div style="left:1561px;top:56px;width:33px;height:36px;background:#000;background-color:#000;background-image:linear-gradient(#008040 1px,transparent 1px),linear-gradient(90deg,#008040 1px,transparent 1px);background-size:12px 12px,12px 12px;background-position:3px -1px,3px -1px"></div>
<svg style="left:1561px;top:56px" width="33" height="36"><polyline points="8.5,35.5 10.5,31.0 12.0,35.5 14.1,26.5 16.5,31.0" fill="none" stroke="#00ff00" stroke-width="1"/></svg>
<div style="left:944px;top:94px;width:37px;height:40px;background:#000;border:1px solid;border-color:#808080 #fff #fff #808080;box-shadow:inset 1px 1px 0 #404040, inset -1px -1px 0 #d4d0c8"></div>
<div style="left:946px;top:96px;width:33px;height:36px;background:#000;background-color:#000;background-image:linear-gradient(#008040 1px,transparent 1px),linear-gradient(90deg,#008040 1px,transparent 1px);background-size:12px 12px,12px 12px;background-position:3px -1px,3px -1px"></div>
<svg style="left:946px;top:96px" width="33" height="36"><polyline points="7.5,36.0 9.5,30.0 12.0,14.0 13.5,23.0 14.5,35.5 16.1,28.5 17.5,35.5 22.0,35.5 24.5,24.5 26.0,29.0 27.5,35.5" fill="none" stroke="#00ff00" stroke-width="1"/></svg>
<div style="left:985px;top:94px;width:37px;height:40px;background:#000;border:1px solid;border-color:#808080 #fff #fff #808080;box-shadow:inset 1px 1px 0 #404040, inset -1px -1px 0 #d4d0c8"></div>
<div style="left:987px;top:96px;width:33px;height:36px;background:#000;background-color:#000;background-image:linear-gradient(#008040 1px,transparent 1px),linear-gradient(90deg,#008040 1px,transparent 1px);background-size:12px 12px,12px 12px;background-position:3px -1px,3px -1px"></div>
<svg style="left:987px;top:96px" width="33" height="36"><polyline points="12.5,35.5 15.8,29.5 17.3,35.5 23.5,35.5 26.3,26.5 28.5,35.5" fill="none" stroke="#00ff00" stroke-width="1"/></svg>
<div style="left:1026px;top:94px;width:37px;height:40px;background:#000;border:1px solid;border-color:#808080 #fff #fff #808080;box-shadow:inset 1px 1px 0 #404040, inset -1px -1px 0 #d4d0c8"></div>
<div style="left:1028px;top:96px;width:33px;height:36px;background:#000;background-color:#000;background-image:linear-gradient(#008040 1px,transparent 1px),linear-gradient(90deg,#008040 1px,transparent 1px);background-size:12px 12px,12px 12px;background-position:3px -1px,3px -1px"></div>
<svg style="left:1028px;top:96px" width="33" height="36"><polyline points="0.5,31.0 4.1,27.0 5.5,32.0 7.9,22.5 10.1,34.5 13.8,29.5 16.5,35.0 18.7,32.0 20.5,35.5 22.5,31.0 25.2,35.5 27.5,35.5 30.0,31.0 32.7,34.5" fill="none" stroke="#00ff00" stroke-width="1"/></svg>
<div style="left:1067px;top:94px;width:37px;height:40px;background:#000;border:1px solid;border-color:#808080 #fff #fff #808080;box-shadow:inset 1px 1px 0 #404040, inset -1px -1px 0 #d4d0c8"></div>
<div style="left:1069px;top:96px;width:33px;height:36px;background:#000;background-color:#000;background-image:linear-gradient(#008040 1px,transparent 1px),linear-gradient(90deg,#008040 1px,transparent 1px);background-size:12px 12px,12px 12px;background-position:3px -1px,3px -1px"></div>
<svg style="left:1069px;top:96px" width="33" height="36"><polyline points="16.5,35.5 20.1,33.0 21.5,35.5 25.5,35.5 28.0,28.5 30.5,35.5" fill="none" stroke="#00ff00" stroke-width="1"/></svg>
<div style="left:1108px;top:94px;width:37px;height:40px;background:#000;border:1px solid;border-color:#808080 #fff #fff #808080;box-shadow:inset 1px 1px 0 #404040, inset -1px -1px 0 #d4d0c8"></div>
<div style="left:1110px;top:96px;width:33px;height:36px;background:#000;background-color:#000;background-image:linear-gradient(#008040 1px,transparent 1px),linear-gradient(90deg,#008040 1px,transparent 1px);background-size:12px 12px,12px 12px;background-position:3px -1px,3px -1px"></div>
<div style="left:1149px;top:94px;width:37px;height:40px;background:#000;border:1px solid;border-color:#808080 #fff #fff #808080;box-shadow:inset 1px 1px 0 #404040, inset -1px -1px 0 #d4d0c8"></div>
<div style="left:1151px;top:96px;width:33px;height:36px;background:#000;background-color:#000;background-image:linear-gradient(#008040 1px,transparent 1px),linear-gradient(90deg,#008040 1px,transparent 1px);background-size:12px 12px,12px 12px;background-position:3px -1px,3px -1px"></div>
<div style="left:1190px;top:94px;width:37px;height:40px;background:#000;border:1px solid;border-color:#808080 #fff #fff #808080;box-shadow:inset 1px 1px 0 #404040, inset -1px -1px 0 #d4d0c8"></div>
<div style="left:1192px;top:96px;width:33px;height:36px;background:#000;background-color:#000;background-image:linear-gradient(#008040 1px,transparent 1px),linear-gradient(90deg,#008040 1px,transparent 1px);background-size:12px 12px,12px 12px;background-position:3px -1px,3px -1px"></div>
<div style="left:1231px;top:94px;width:37px;height:40px;background:#000;border:1px solid;border-color:#808080 #fff #fff #808080;box-shadow:inset 1px 1px 0 #404040, inset -1px -1px 0 #d4d0c8"></div>
<div style="left:1233px;top:96px;width:33px;height:36px;background:#000;background-color:#000;background-image:linear-gradient(#008040 1px,transparent 1px),linear-gradient(90deg,#008040 1px,transparent 1px);background-size:12px 12px,12px 12px;background-position:3px -1px,3px -1px"></div>
<div style="left:944px;top:162px;width:700px;height:80px;background:#000;border:1px solid;border-color:#808080 #fff #fff #808080;box-shadow:inset 1px 1px 0 #404040, inset -1px -1px 0 #d4d0c8"></div>
<div style="left:946px;top:164px;width:640px;height:76px;background:#000;background-color:#000;background-image:linear-gradient(#008040 1px,transparent 1px),linear-gradient(90deg,#008040 1px,transparent 1px);background-size:12px 12px,12px 12px;background-position:-1px 0px,-1px 0px"></div>
<div style="left:946px;top:186px;width:534px;height:2px;background:#0a7af0;"></div>
<div style="left:1480px;top:185px;width:100px;height:2px;background:#0a7af0;"></div>
<div style="left:831px;top:263px;width:169px;height:65px;border:1px solid #808080;box-shadow:1px 1px 0 #fff, inset 1px 1px 0 #fff"></div>
<div class="c" style="left:838px;top:258px;background:#d4d0c8;padding:0 2px 0 1px">物理内存<i>(MB)</i></div>
<div style="left:831px;top:342px;width:169px;height:37px;border:1px solid #808080;box-shadow:1px 1px 0 #fff, inset 1px 1px 0 #fff"></div>
<div class="c" style="left:838px;top:337px;background:#d4d0c8;padding:0 2px 0 1px">核心内存<i>(MB)</i></div>
<div style="left:1014px;top:263px;width:171px;height:81px;border:1px solid #808080;box-shadow:1px 1px 0 #fff, inset 1px 1px 0 #fff"></div>
<div class="c" style="left:1021px;top:258px;background:#d4d0c8;padding:0 2px 0 1px">系统</div>
<div class="c" style="left:840px;top:271px">总数</div>
<div class="c r" style="left:903px;top:271px;width:90px"><i>65535</i></div>
<div class="c" style="left:840px;top:285px">已缓存</div>
<div class="c r" style="left:903px;top:285px;width:90px"><i>16801</i></div>
<div class="c" style="left:840px;top:299px">可用</div>
<div class="c r" style="left:903px;top:299px;width:90px"><i>16743</i></div>
<div class="c" style="left:840px;top:312px">空闲</div>
<div class="c r" style="left:903px;top:312px;width:90px"><i>3</i></div>
<div class="c" style="left:840px;top:351px">分页数</div>
<div class="c r" style="left:903px;top:351px;width:90px"><i>2372</i></div>
<div class="c" style="left:840px;top:365px">未分页</div>
<div class="c r" style="left:903px;top:365px;width:90px"><i>4157</i></div>
<div class="c" style="left:1023px;top:271px">句柄数</div>
<div class="c r" style="left:1087px;top:271px;width:90px"><i>31423</i></div>
<div class="c" style="left:1023px;top:285px">线程数</div>
<div class="c r" style="left:1087px;top:285px;width:90px"><i>1005</i></div>
<div class="c" style="left:1023px;top:299px">进程数</div>
<div class="c r" style="left:1087px;top:299px;width:90px"><i>46</i></div>
<div class="c" style="left:1023px;top:312px">开机时间</div>
<div class="c r" style="left:1087px;top:312px;width:90px"><i>161:18:46:59</i></div>
<div class="c" style="left:1023px;top:326px">提交<i>(GB)</i></div>
<div class="c r" style="left:1087px;top:326px;width:90px"><i>48 / 127</i></div>
<div style="left:1014px;top:359px;width:172px;height:21px;background:#d4d0c8;border:1px solid #000;box-shadow:inset 1px 1px 0 #fff, inset -1px -1px 0 #404040, inset -2px -2px 0 #808080"></div>
<div class="c" style="left:1013px;top:362px;width:172px;text-align:center">资源监视器<i>(R)...</i></div>
<div style="left:810px;top:405px;width:105px;height:18px;border:1px solid;border-color:#808080 #fff #fff #808080"></div>
<div style="left:917px;top:405px;width:129px;height:18px;border:1px solid;border-color:#808080 #fff #fff #808080"></div>
<div style="left:1048px;top:405px;width:260px;height:18px;border:1px solid;border-color:#808080 #fff #fff #808080"></div>
<div style="left:1310px;top:405px;width:300px;height:18px;border:1px solid;border-color:#808080 #fff #fff #808080"></div>
<div class="c" style="left:812px;top:407px">进程数<i>: 46</i></div>
<div class="c" style="left:918px;top:407px"><i>CPU </i>使用率<i>: 5%</i></div>
<div class="c" style="left:1050px;top:407px">物理内存<i>: 74%</i></div>
<div style="left:806px;top:424px;width:771px;height:1px;background:#808080;"></div>
<div style="left:806px;top:425px;width:771px;height:1px;background:#404040;"></div>
<!-- lower window -->
<div style="left:803px;top:426px;width:5px;height:94px;background:#d4d0c8;"></div>
<div style="left:803px;top:426px;width:2px;height:94px;background:#fff;"></div>
<div style="left:808px;top:426px;width:537px;height:94px;background:#fff;"></div>
<div style="left:808px;top:426px;width:296px;height:7px;border:1px solid #707070;border-top:none"></div>
<div style="left:1104px;top:426px;width:17px;height:94px;background:#e9e7e3;background-image:linear-gradient(45deg,#fff 25%,transparent 25%,transparent 75%,#fff 75%),linear-gradient(45deg,#fff 25%,transparent 25%,transparent 75%,#fff 75%);background-size:2px 2px;background-position:0 0,1px 1px;background-color:#d4d0c8"></div>
<div style="left:1104px;top:513px;width:17px;height:17px;background:#d4d0c8;border:1px solid;border-color:#fff #404040 #404040 #fff;box-shadow:inset -1px -1px 0 #808080"></div>
<div style="left:1110px;top:518px;width:5px;height:2px;background:#000;"></div>
<div style="left:1126px;top:426px;width:200px;height:17px;border:1px solid #707070;border-top:none"></div>
<div class="c" style="left:1297px;top:423px;"><i style="font-weight:bold">0</i></div>
<div style="left:1310px;top:431px;width:6px;height:1px;background:#000;"></div>
<div style="left:1315px;top:426px;width:1px;height:6px;background:#000;"></div>
<div style="left:1327px;top:426px;width:17px;height:85px;background:#d4d0c8;border:1px solid;border-color:#fff #404040 #404040 #fff;box-shadow:inset -1px -1px 0 #808080"></div>
<div style="left:1327px;top:512px;width:17px;height:17px;background:#d4d0c8;border:1px solid;border-color:#fff #404040 #404040 #fff;box-shadow:inset -1px -1px 0 #808080"></div>
<div style="left:1333px;top:518px;width:5px;height:2px;background:#000;"></div>
<div style="left:1344px;top:426px;width:2px;height:94px;background:#404040;"></div>
<div style="left:1346px;top:426px;width:231px;height:94px;background:#3a6ea5;"></div>
</body></html>
